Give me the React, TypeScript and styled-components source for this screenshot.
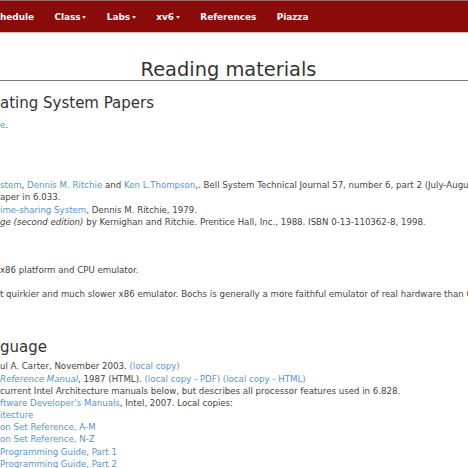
import React from "react";
import styled, { createGlobalStyle } from "styled-components";

const Global = createGlobalStyle`
  html, body { margin: 0; padding: 0; background: #fff; }
  body {
    font-family: "DejaVu Sans", Verdana, sans-serif;
    color: #333;
    overflow: hidden;
  }
`;

const Page = styled.div`
  width: 468px;
  height: 468px;
  overflow: hidden;
  background: #fff;
`;

const NavBar = styled.nav`
  height: 31px;
  background: #8b0b0b;
  border-top: 1px solid #a56a6a;
  border-bottom: 1px solid #dcbcbc;
  display: flex;
  align-items: center;
  gap: 20.3px;
  white-space: nowrap;
  overflow: hidden;
`;

const NavItem = styled.a`
  display: flex;
  align-items: center;
  gap: 2px;
  color: #fff;
  font-weight: bold;
  font-size: 8.9px;
  text-decoration: none;
`;

const Caret = styled.span`
  width: 0;
  height: 0;
  border-left: 2.5px solid transparent;
  border-right: 2.5px solid transparent;
  border-top: 3px solid #f2dada;
  margin-top: 1px;
`;

const Main = styled.main`
  display: flex;
  flex-direction: column;
`;

const Title = styled.h1`
  margin: 27px 0 0;
  padding-right: 11px;
  font-size: 19.4px;
  line-height: 20px;
  font-weight: normal;
  text-align: center;
  color: #333;
  border-bottom: 1px solid #777;
`;

const Heading = styled.h2<{ $mt: number }>`
  margin: ${(p) => p.$mt}px 0 0;
  font-size: 15px;
  line-height: 18px;
  font-weight: normal;
  color: #333;
  white-space: nowrap;
`;

const Block = styled.div<{ $mt: number }>`
  margin-top: ${(p) => p.$mt}px;
  display: flex;
  flex-direction: column;
`;

const Line = styled.div`
  height: 12.2px;
  line-height: 12.2px;
  font-size: 8.65px;
  white-space: nowrap;
  overflow: hidden;
  color: #444;
`;

const Link = styled.a`
  color: #5a94d0;
  text-decoration: none;
`;

const Em = styled.i`
  font-style: italic;
`;

export default function App() {
  return (
    <Page>
      <Global />
      <NavBar>
        <NavItem>hedule</NavItem>
        <NavItem>
          Class<Caret />
        </NavItem>
        <NavItem>
          Labs<Caret />
        </NavItem>
        <NavItem>
          xv6<Caret />
        </NavItem>
        <NavItem>References</NavItem>
        <NavItem>Piazza</NavItem>
      </NavBar>
      <Main>
        <Title>Reading materials</Title>
        <Heading $mt={13}>ating System Papers</Heading>
        <Block $mt={7}>
          <Line>
            <Link>e</Link>.
          </Line>
        </Block>
        <Block $mt={48}>
          <Line>
            <Link>stem</Link>, <Link>Dennis M. Ritchie</Link> and{" "}
            <Link>Ken L.Thompson</Link>,. Bell System Technical Journal 57,
            number 6, part 2 (July-August 1978) pages 1905-1930.
          </Line>
          <Line>aper in 6.033.</Line>
          <Line>
            <Link>ime-sharing System</Link>, Dennis M. Ritchie, 1979.
          </Line>
          <Line>
            <Em>ge (second edition)</Em> by Kernighan and Ritchie. Prentice
            Hall, Inc., 1988. ISBN 0-13-110362-8, 1998.
          </Line>
        </Block>
        <Block $mt={36}>
          <Line>x86 platform and CPU emulator.</Line>
        </Block>
        <Block $mt={12}>
          <Line>
            t quirkier and much slower x86 emulator. Bochs is generally a more
            faithful emulator of real hardware than QEMU.
          </Line>
        </Block>
        <Heading $mt={38}>guage</Heading>
        <Block $mt={4}>
          <Line>
            ul A. Carter, November 2003. <Link>(local copy)</Link>
          </Line>
          <Line>
            <Link>
              <Em>Reference Manual</Em>
            </Link>
            , 1987 (HTML). <Link>(local copy - PDF)</Link>{" "}
            <Link>(local copy - HTML)</Link>
          </Line>
          <Line>
            current Intel Architecture manuals below, but describes all
            processor features used in 6.828.
          </Line>
          <Line>
            <Link>ftware Developer's Manuals</Link>, Intel, 2007. Local copies:
          </Line>
          <Line>
            <Link>itecture</Link>
          </Line>
          <Line>
            <Link>on Set Reference, A-M</Link>
          </Line>
          <Line>
            <Link>on Set Reference, N-Z</Link>
          </Line>
          <Line>
            <Link>Programming Guide, Part 1</Link>
          </Line>
          <Line>
            <Link>Programming Guide, Part 2</Link>
          </Line>
        </Block>
      </Main>
    </Page>
  );
}
